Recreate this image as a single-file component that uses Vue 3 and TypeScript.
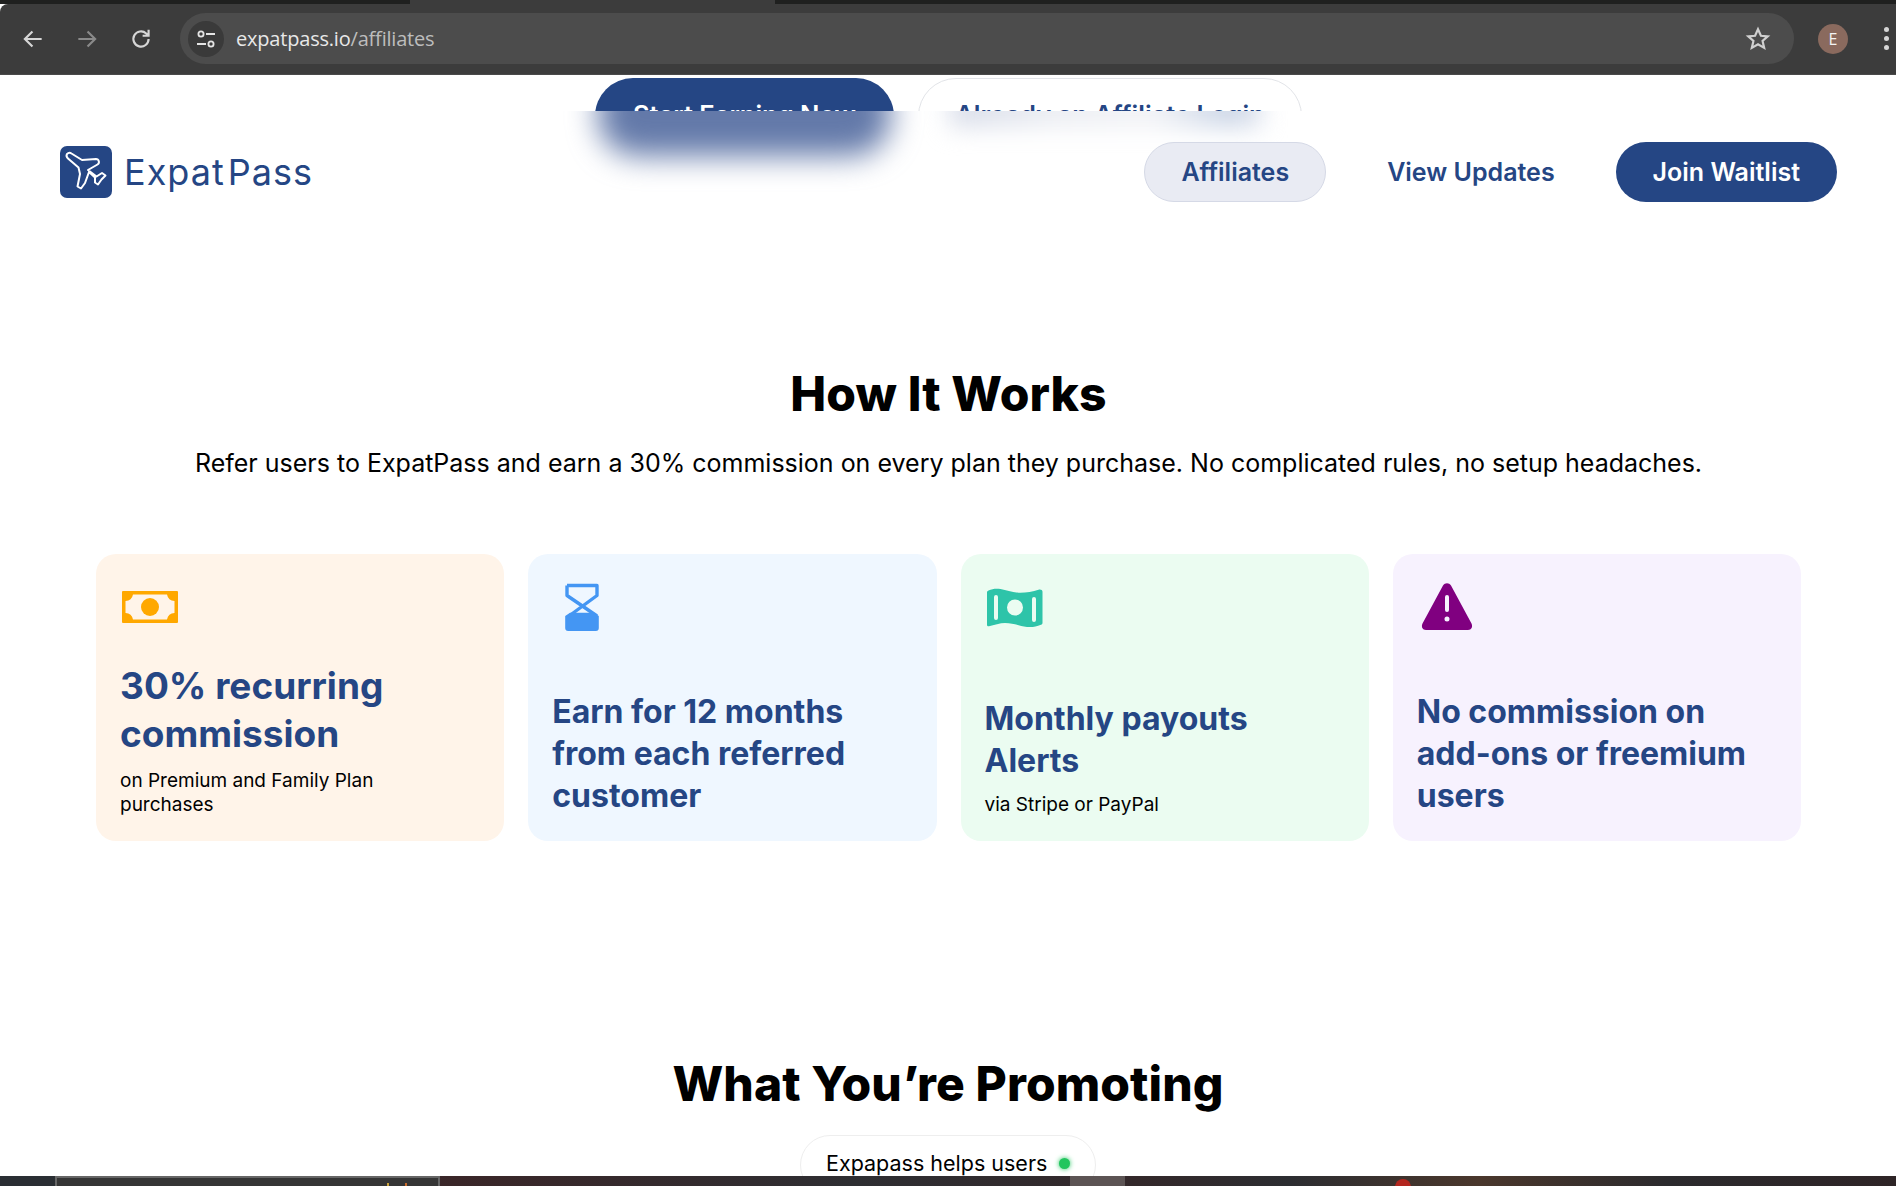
<script setup lang="ts">
type Card = {
  id: string;
  tone: string;
  title: string[];
  big?: boolean;
  sub?: string[];
};

const cards: Card[] = [
  { id: "cash", tone: "peach", big: true, title: ["30% recurring", "commission"], sub: ["on Premium and Family Plan", "purchases"] },
  { id: "hourglass", tone: "sky", title: ["Earn for 12 months", "from each referred", "customer"] },
  { id: "money", tone: "mint", title: ["Monthly payouts", "Alerts"], sub: ["via Stripe or PayPal"] },
  { id: "warn", tone: "lilac", title: ["No commission on", "add-ons or freemium", "users"] },
];
</script>

<template>
  <div class="screen">
    <div class="tabstrip"><span class="active-tab"></span></div>
    <div class="toolbar">
      <svg class="tb-icon" viewBox="0 0 24 24"><path d="M20 12H5M11.5 5 4.500 12l7 7" fill="none" stroke="#d6d6d6" stroke-width="2" /></svg>
      <svg class="tb-icon dim" viewBox="0 0 24 24"><path d="M4 12h15M12.500 5l7 7-7 7" fill="none" stroke="#8a8a8a" stroke-width="2" /></svg>
      <svg class="tb-icon" viewBox="0 0 24 24"><path d="M19 12a7 7 0 1 1-2.200-5.100L19 9M19 3.500V9h-5.500" fill="none" stroke="#d6d6d6" stroke-width="2" /></svg>
      <div class="omnibox">
        <span class="site-btn">
          <svg viewBox="0 0 24 24" width="24" height="24"><g fill="none" stroke="#e4e4e4" stroke-width="1.800"><circle cx="7" cy="7" r="2.600" /><path d="M12 7h9M3 17h9" /><circle cx="17" cy="17" r="2.600" /></g></svg>
        </span>
        <span class="url">expatpass.io<span class="url-path">/affiliates</span></span>
        <svg class="star" viewBox="0 0 24 24"><path d="m12 3 2.700 6 6.300.600-4.800 4.200 1.500 6.400L12 16.800 6.300 20.200l1.500-6.400L3 9.600 9.300 9z" fill="none" stroke="#d0d0d0" stroke-width="2" /></svg>
      </div>
      <span class="avatar">E</span>
      <span class="dots"><i></i><i></i><i></i></span>
    </div>

    <div class="page">
      <!-- the hero scrolled under the sticky header, only its top still shows -->
      <div class="hero-actions">
        <a class="hero-btn primary">Start Earning Now</a>
        <a class="hero-btn outline">Already an Affiliate Login</a>
      </div>

      <header class="site-header">
        <span class="ghost ghost-primary"></span>
        <span class="ghost ghost-outline"></span>
        <div class="brand">
          <svg class="brand-mark" viewBox="0 0 52 52">
            <rect width="52" height="52" rx="7" fill="#254684" />
            <path d="M7 8c1.500-1.500 3-1.500 4.500-.5L22 14l14-1c3 0 4 4 1.500 5.500L28 24l8.500 6.500L42 27l3.500 2.500-4 4-3.500 5-3-2v-5l-6-5.500-4 11-4 5.500-3.500-2L20 28l-1.500-6.500L8 12.500C6.500 11 6 9.500 7 8Z" fill="none" stroke="#fff" stroke-width="2" stroke-linejoin="round" />
          </svg>
          <span class="brand-name">Expat<span class="brand-gap">Pass</span></span>
        </div>
        <nav class="nav">
          <a class="nav-link current">Affiliates</a>
          <a class="nav-link">View Updates</a>
          <a class="nav-link cta">Join Waitlist</a>
        </nav>
      </header>

      <section class="how">
        <h2>How It Works</h2>
        <p class="lead">Refer users to ExpatPass and earn a 30% commission on every plan they purchase. No complicated rules, no setup headaches.</p>
        <div class="cards">
          <article v-for="c in cards" :key="c.id" class="card" :class="c.tone">
            <div class="card-icon">
              <svg v-if="c.id === 'cash'" viewBox="0 0 60 60" width="60" height="60">
                <path fill-rule="evenodd" fill="#ffa800" d="M3 14h54a1 1 0 0 1 1 1v30a1 1 0 0 1-1 1H3a1 1 0 0 1-1-1V15a1 1 0 0 1 1-1Zm10 3.500a8 8 0 0 1-7.500 6.500v12a8 8 0 0 1 7.500 6.500h34a8 8 0 0 1 7.500-6.500V24a8 8 0 0 1-7.500-6.500Z" />
                <circle cx="30" cy="30" r="9" fill="#ffa800" />
              </svg>
              <svg v-else-if="c.id === 'hourglass'" viewBox="0 0 60 60" width="60" height="60">
                <path fill="none" stroke="#4496f3" stroke-width="3.400" stroke-linejoin="round" d="M15 8.500h30v10L17 39M45 39 15 18.500v-10" />
                <path fill="#4496f3" d="M13.200 39 18 35.700h24l4.800 3.300V51a3 3 0 0 1-3 3H16.200a3 3 0 0 1-3-3Z" />
              </svg>
              <svg v-else-if="c.id === 'money'" viewBox="0 0 60 60" width="60" height="60">
                <path fill-rule="evenodd" fill="#2ec4a9" d="M2 15.500c0-1 .5-1.500 1.500-2 4-1.800 8-2 12-1.400 6 1 11 3.600 18 3.600 7 .2 14-1 20-3 2-.6 4 .2 4 2v31c0 1-.5 1.600-1.500 2-5 2-9 2.800-14 2.200-8-1-13-4-22-4-5 0-11 2-16 3.400-1 .2-2-.4-2-1.400ZM9 20v21a2 2 0 0 0 4 0V20a2 2 0 0 0-4 0Zm38 2v21a2 2 0 0 0 4 0V22a2 2 0 0 0-4 0ZM30 22.500a8 8 0 1 0 0 16 8 8 0 0 0 0-16Z" />
              </svg>
              <svg v-else viewBox="0 0 60 60" width="60" height="60">
                <path fill-rule="evenodd" fill="#800080" d="M26 8.500c2-3 6-3 8 0l20.500 38c1.500 3 0 6.500-3.500 6.500H9c-3.500 0-5-3.500-3.500-6.500ZM28 20v13a2 2 0 0 0 4 0V20a2 2 0 0 0-4 0Zm2 19.500a2.500 2.500 0 1 0 0 5 2.500 2.500 0 0 0 0-5Z" />
              </svg>
            </div>
            <div class="card-text">
              <h3 :class="{ big: c.big }"><span v-for="line in c.title" :key="line">{{ line }}</span></h3>
              <p v-if="c.sub" class="card-sub"><span v-for="line in c.sub" :key="line">{{ line }}</span></p>
            </div>
          </article>
        </div>
      </section>

      <section class="promo">
        <h2>What You’re Promoting</h2>
        <div class="promo-pill">Expapass helps users <i class="live-dot"></i></div>
      </section>
    </div>

    <div class="taskbar">
      <span class="tb-window"><i></i><i></i></span>
      <span class="tb-tile"></span>
      <span class="tb-red"></span>
    </div>
  </div>
</template>

<style>
html, body { margin: 0; background: #fff; }
</style>

<style scoped>
.screen { width: 1896px; height: 1186px; overflow: hidden; display: flex; flex-direction: column; font-family: Inter, "Liberation Sans", sans-serif; color: #000; }
.tabstrip { height: 4px; background: #1f201f; flex-shrink: 0; display: flex; padding-left: 410px; }
.active-tab { width: 365px; background: #3c3c3c; }
.toolbar { height: 71px; flex-shrink: 0; background: #3c3c3c; display: flex; align-items: center; padding: 0 0 1px 20px; box-sizing: border-box; border-top-left-radius: 8px; border-bottom: 1px solid #4a4a4a; }
.tb-icon { width: 26px; height: 26px; margin-right: 28px; flex-shrink: 0; }
.omnibox { width: 1614px; height: 51px; margin-left: -2px; border-radius: 26px; background: #4c4c4c; display: flex; align-items: center; padding: 0 23px 0 8px; box-sizing: border-box; flex-shrink: 0; }
.site-btn { width: 36px; height: 36px; border-radius: 50%; background: #3a3a3a; display: flex; align-items: center; justify-content: center; flex-shrink: 0; }
.url { margin-left: 12px; color: #e8e8e8; font: 20px "Open Sans", sans-serif; letter-spacing: -0.2px; flex: 1; }
.url-path { color: #bdbdbd; }
.star { width: 26px; height: 26px; }
.avatar { margin-left: 24px; width: 30px; height: 30px; border-radius: 50%; background: #8a6a5e; color: #f4f4f4; font: 16px "Open Sans", sans-serif; display: flex; align-items: center; justify-content: center; flex-shrink: 0; }
.dots { margin-left: 36px; display: grid; gap: 4px; flex-shrink: 0; }
.dots i { display: block; width: 5px; height: 5px; border-radius: 50%; background: #d6d6d6; }

.page { height: 1101px; overflow: hidden; background: #fff; flex-shrink: 0; }
.hero-actions { height: 36px; box-sizing: border-box; overflow: hidden; display: flex; justify-content: center; gap: 24px; padding: 3px 0 0 1px; }
.hero-btn { height: 76px; padding-bottom: 4px; border-radius: 38px; box-sizing: border-box; flex-shrink: 0; display: flex; align-items: center; justify-content: center; font-size: 25.5px; font-weight: 600; }
.hero-btn.primary { width: 299px; background: #254684; color: #fff; }
.hero-btn.outline { width: 384px; background: #fff; color: #254684; border: 1px solid #e2e4e8; }

.site-header { position: relative; overflow: hidden; height: 128px; padding: 31px 59px 0 60px; box-sizing: border-box; display: flex; justify-content: space-between; align-items: flex-start; background: #fff; }
.ghost { position: absolute; display: block; }
.ghost-primary { left: 598px; top: -40px; width: 293px; height: 85px; border-radius: 40px; background: #6379a9; filter: blur(15px); }
.ghost-outline { left: 950px; top: -18px; width: 312px; height: 34px; background: linear-gradient(90deg, #d6dbe8, #eceef3 35%, #f1f2f6 65%, #c8d3e5 90%, #e0e4ee); filter: blur(12px); }
.brand { position: relative; display: flex; align-items: center; gap: 12px; height: 60px; }
.brand-mark { width: 52px; height: 52px; }
.brand-name { color: #254684; font: 400 36px Inter, sans-serif; letter-spacing: 1px; }
.brand-gap { margin-left: 3px; }
.nav { position: relative; display: flex; align-items: center; gap: 0; }
.nav-link { height: 60px; border-radius: 30px; box-sizing: border-box; display: flex; align-items: center; padding: 0 36px; font-size: 25px; font-weight: 600; color: #254684; border: 1px solid transparent; }
.nav-link.current { background: #e9ebf3; border-color: #d5d9e6; margin-right: 24px; }
.nav-link.cta { background: #254684; color: #fff; margin-left: 24px; }

.how { padding: 127px 95px 0 96px; }
h2 { margin: 0; text-align: center; font-size: 48px; line-height: 56px; font-weight: 800; color: #000; letter-spacing: 0.1px; }
.lead { margin: 23px 0 0; text-align: center; font-size: 25px; line-height: 36px; }
.cards { margin-top: 73px; display: grid; grid-template-columns: repeat(4, 1fr); gap: 24px; }
.card { border-radius: 20px; padding: 24px; display: flex; flex-direction: column; justify-content: space-between; }
.peach { background: #fff4e9; }
.sky { background: #eff7ff; }
.mint { background: #ebfcf1; }
.lilac { background: #f7f2fe; }
.card-icon { height: 60px; margin-bottom: 24px; }
.card-icon svg { display: block; margin-top: -1px; }
h3 { margin: 0; color: #254684; font-size: 32px; line-height: 42px; font-weight: 700; }
h3.big { font-size: 37px; line-height: 48px; }
h3 span, .card-sub span { display: block; white-space: nowrap; }
.card-sub { margin: 11px 0 0; font-size: 19px; line-height: 24px; }

.promo { margin-top: 215px; display: flex; flex-direction: column; align-items: center; }
.promo-pill { margin-top: 23px; height: 60px; width: 296px; box-sizing: border-box; padding: 0 25px 4px; border-radius: 30px; border: 1px solid #eeeeee; display: flex; align-items: center; justify-content: space-between; font-size: 21.500px; flex-shrink: 0; }
.live-dot { width: 11px; height: 11px; border-radius: 50%; background: #22c55e; box-shadow: 0 0 5px #22c55e; }

.taskbar { height: 10px; flex-shrink: 0; background: linear-gradient(90deg, #2a2e33 0, #2a2e33 3%, #3a2628 24%, #2e2e32 45%, #33282a 60%, #2c2d31 68%, #4a372c 78%, #2b2a2d 88%, #2e2426); position: relative; overflow: hidden; }
.tb-window { position: absolute; left: 55px; top: 0; width: 385px; height: 10px; background: #353535; border: 2px solid #666; border-bottom: 0; box-sizing: border-box; }
.tb-window i { position: absolute; bottom: 0; width: 2px; height: 3px; background: #c9a23a; left: 330px; }
.tb-window i + i { left: 348px; background: #c96a2a; }
.tb-tile { position: absolute; left: 1070px; top: 0; width: 55px; height: 10px; background: #5c5454; }
.tb-red { position: absolute; left: 1395px; top: 3px; width: 16px; height: 16px; border-radius: 50%; background: #b3261e; }
</style>
